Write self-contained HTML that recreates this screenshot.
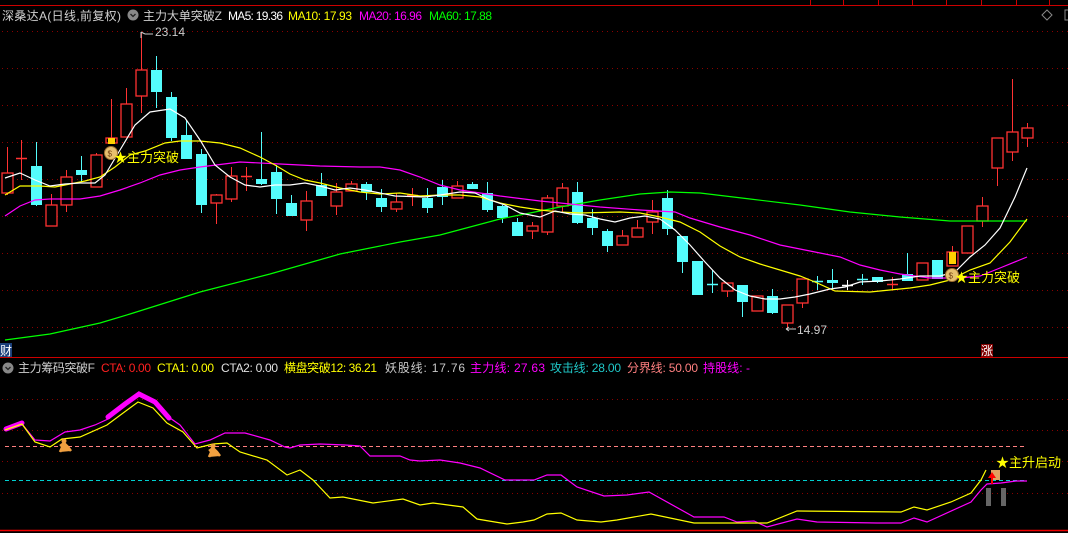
<!DOCTYPE html>
<html><head><meta charset="utf-8"><style>
html,body{margin:0;padding:0;background:#000;width:1068px;height:533px;overflow:hidden}
svg{display:block}
text{font-family:"Liberation Sans","Noto Sans CJK SC",sans-serif;font-size:12px}
</style></head><body>
<svg id="s" width="1068" height="533" xmlns="http://www.w3.org/2000/svg">
<rect width="1068" height="533" fill="#000"/>
<line x1="0" y1="5.5" x2="1068" y2="5.5" stroke="#c00" stroke-width="1"/>
<g stroke="#c00">
<line x1="810.5" y1="0" x2="810.5" y2="5"/><line x1="843.5" y1="0" x2="843.5" y2="5"/><line x1="878.5" y1="0" x2="878.5" y2="5"/><line x1="912.5" y1="0" x2="912.5" y2="5"/><line x1="946.5" y1="0" x2="946.5" y2="5"/><line x1="981.5" y1="0" x2="981.5" y2="5"/><line x1="1016.5" y1="0" x2="1016.5" y2="5"/><line x1="1049.5" y1="0" x2="1049.5" y2="5"/>
</g>
<g stroke="#8b0000" stroke-dasharray="1,4" stroke-width="1">
<line x1="2" y1="31.5" x2="1068" y2="31.5"/><line x1="2" y1="68.5" x2="1068" y2="68.5"/><line x1="2" y1="105.5" x2="1068" y2="105.5"/><line x1="2" y1="142.5" x2="1068" y2="142.5"/><line x1="2" y1="179.5" x2="1068" y2="179.5"/><line x1="2" y1="216.5" x2="1068" y2="216.5"/><line x1="2" y1="253.5" x2="1068" y2="253.5"/><line x1="2" y1="290.5" x2="1068" y2="290.5"/><line x1="2" y1="327.5" x2="1068" y2="327.5"/>
<line x1="2" y1="399.5" x2="1068" y2="399.5"/><line x1="2" y1="430.5" x2="1068" y2="430.5"/><line x1="2" y1="461.5" x2="1068" y2="461.5"/><line x1="2" y1="493.5" x2="1068" y2="493.5"/>
</g>
<line x1="0" y1="357.5" x2="1068" y2="357.5" stroke="#c00"/>
<line x1="0" y1="530.5" x2="1068" y2="530.5" stroke="#e00" stroke-width="1.5"/>
<line x1="5" y1="446.5" x2="1027" y2="446.5" stroke="#ff8080" stroke-dasharray="4,3"/>
<line x1="5" y1="480.5" x2="1027" y2="480.5" stroke="#00d0d0" stroke-dasharray="4,3"/>
<g id="candles"></g>
<g fill="none" stroke-width="1.2">
<polyline stroke="#00ff00" points="5,340 50,334 100,323 130,314 200,292 270,274 340,254 400,242 440,235 500,219 560,207 600,200 640,194 670,192 700,193 750,199 800,205 850,212 900,217 950,221 1027,221"/>
<polyline stroke="#ff00ff" points="5,216 20,206 35,200 50,199 80,199 100,196 120,190 140,183 160,175 180,170 200,167 240,162 280,164 320,166 360,167 380,167 400,170 420,177 440,185 460,190 480,193 500,196 540,201 560,203 600,207 640,210 675,212 690,218 720,227 750,235 780,245 810,251 840,257 860,265 880,270 900,274 930,278 960,278 980,276 1000,268 1027,257"/>
<polyline stroke="#ffff00" points="5,195 20,186 40,186 55,187 70,184 85,181 100,177 115,167 130,155 145,151 165,143 180,141 200,141 220,143 240,148 260,157 275,165 290,174 305,180 320,183 340,188 360,192 380,194 400,193 420,196 440,195 460,195 480,197 500,203 520,207 540,210 560,212 580,213 620,212 640,213 660,217 680,222 700,232 720,246 740,257 760,264 780,270 800,276 815,282 835,291 870,292 890,290 910,288 930,285 950,280 970,270 990,263 1010,242 1027,219"/>
<polyline stroke="#ffffff" points="5,178 20,173 35,180 50,186 65,184 80,183 95,183 105,175 120,150 135,125 150,112 170,109 185,118 200,140 215,165 230,177 245,185 260,187 275,185 290,185 305,183 320,186 335,190 350,188 365,190 380,193 395,196 425,197 440,195 460,192 475,193 490,200 505,205 520,213 540,217 555,211 570,214 585,215 600,219 615,222 630,218 645,216 660,219 675,230 690,245 705,262 720,278 735,290 750,296 765,299 780,299 795,297 810,294 830,289 845,287 860,282 880,281 900,279 920,276 940,276 955,272 970,257 985,245 1000,228 1015,197 1027,168"/>
</g>
<!-- markers main -->
<rect x="108" y="138" width="7" height="6" fill="#ffd000"/>
<circle cx="111" cy="153" r="6.5" fill="#e8c070" stroke="#a07030"/>
<text x="107.5" y="156.5" style="font-size:8px" fill="#704010">$</text>
<text x="114" y="162" fill="#ffff00" style="font-size:13px">★主力突破</text>
<rect x="949" y="252" width="7" height="12" fill="#ffd000"/>
<circle cx="952" cy="275" r="6.5" fill="#e8c070" stroke="#a07030"/>
<text x="948.5" y="278.5" style="font-size:8px" fill="#704010">$</text>
<text x="955" y="282" fill="#ffff00" style="font-size:13px">★主力突破</text>
<path d="M141 32 V38 M141 32 l4 2 M145 34 h8" stroke="#ccc" fill="none"/>
<text x="155" y="36" fill="#ccc">23.14</text>
<path d="M786 329 h10 M786 329 l3 -2 M786 329 l3 2" stroke="#ccc" fill="none"/>
<text x="797" y="334" fill="#ccc">14.97</text>
<!-- header -->
<text x="2" y="20" fill="#d0d0d0" textLength="119">深桑达A(日线,前复权)</text>
<circle cx="133" cy="15" r="5.5" fill="#888"/><path d="M130.5 14 l2.5 2.5 l2.5 -2.5" stroke="#222" fill="none" stroke-width="1.3"/>
<text x="143" y="20" fill="#d0d0d0" textLength="79">主力大单突破Z</text>
<text x="228" y="20" fill="#fff" textLength="55">MA5: 19.36</text>
<text x="288" y="20" fill="#ffff00" textLength="64">MA10: 17.93</text>
<text x="359" y="20" fill="#ff00ff" textLength="63">MA20: 16.96</text>
<text x="429" y="20" fill="#00ff00" textLength="63">MA60: 17.88</text>
<path d="M1042 15 l5 -5 l5 5 l-5 5 z" stroke="#888" fill="none"/>
<rect x="1065" y="10" width="5" height="10" stroke="#888" fill="none"/>
<rect x="0" y="343" width="12" height="14" fill="#1a3f7a"/>
<text x="0" y="355" fill="#fff">财</text>
<rect x="981" y="344" width="12" height="13" fill="#800000"/>
<text x="981" y="355" fill="#fff">涨</text>
<!-- sub header -->
<circle cx="8" cy="368" r="5.5" fill="#888"/><path d="M5.5 367 l2.5 2.5 l2.5 -2.5" stroke="#222" fill="none" stroke-width="1.3"/>
<text x="18" y="372" fill="#d0d0d0" textLength="77">主力筹码突破F</text>
<text x="101" y="372" fill="#ff2020" textLength="50">CTA: 0.00</text>
<text x="157" y="372" fill="#ffff00" textLength="57">CTA1: 0.00</text>
<text x="221" y="372" fill="#e0e0e0" textLength="57">CTA2: 0.00</text>
<text x="284" y="372" fill="#ffff00" textLength="93">横盘突破12: 36.21</text>
<text x="385" y="372" fill="#c8c8c8" textLength="80">妖股线: 17.76</text>
<text x="470" y="372" fill="#ff00ff" textLength="75">主力线: 27.63</text>
<text x="550" y="372" fill="#20c8c8" textLength="71">攻击线: 28.00</text>
<text x="627" y="372" fill="#ff8080" textLength="71">分界线: 50.00</text>
<text x="703" y="372" fill="#ff00ff" textLength="47">持股线: -</text>
<!-- sub lines -->
<g fill="none">
<polyline stroke="#ff00ff" stroke-width="1.2" points="22,424 35,440 50,441 65,432 80,430 95,425 108,419 125,405 140,395 155,403 170,418 180,425 195,444 210,440 225,433 245,433 270,440 285,447 290,448 300,445 320,444 345,445 360,446 370,456 400,456 410,460 420,461 440,460 460,463 480,468 505,480 534,480 547,475 561,475 577,487 604,496 627,495 649,492 694,517 724,517 737,522 754,521 767,527 797,519 817,522 877,523 901,523 914,518 927,522 971,502 981,490 987,484 1001,483 1016,481 1027,481"/>
<polyline stroke="#ff00ff" stroke-width="5" stroke-linecap="round" points="6,429 22,423"/>
<polyline stroke="#ff00ff" stroke-width="5" stroke-linecap="round" points="108,417 125,404 139,394 155,402 169,418"/>
<polyline stroke="#ffff00" stroke-width="1.2" points="5,430 22,424 35,442 50,447 62,439 80,437 107,425 138,402 153,408 167,423 183,432 197,448 213,444 227,443 240,452 267,460 287,475 300,470 313,480 330,498 343,497 373,503 403,499 420,505 433,503 463,507 477,519 507,524 523,522 534,520 547,514 561,513 577,520 601,522 617,520 651,514 694,523 767,523 797,511 901,512 914,507 927,510 951,502 971,493 981,480 986,470"/>
</g>
<g fill="#f0a040"><circle cx="64" cy="441" r="2.5"/><path d="M60 452 l4 -9 l4 4 l3 4 M64 443 l-4 3" stroke="#f0a040" stroke-width="2.5"/>
<circle cx="213" cy="446" r="2.5"/><path d="M209 457 l4 -9 l4 4 l3 4 M213 448 l-4 3" stroke="#f0a040" stroke-width="2.5"/></g>
<rect x="986" y="488" width="5" height="18" fill="#666"/><rect x="1001" y="488" width="5" height="18" fill="#666"/>
<rect x="991" y="470" width="9" height="10" fill="#e0a060"/>
<path d="M988 478 l4 -6 l4 6 z M991 478 h2 v6 h-2z" fill="#ff0000"/>
<text x="996" y="467" fill="#ffff00" style="font-size:13px">★主升启动</text>
</svg>
<script>
var C=[[7,'r',173,193,147,195],[21,'r',158,158,140,180],[36,'c',166,205,142,206],[51,'r',205,226,194,226],[66,'r',177,205,170,212],[81,'c',170,175,156,182],[96,'r',155,187,153,187],[111,'r',138,143,99,143],[126,'r',104,137,88,137],[141,'r',70,96,32,113],[156,'c',70,92,56,108],[171,'c',97,138,92,141],[186,'c',135,159,120,159],[201,'c',154,205,149,213],[216,'r',195,203,194,224],[231,'r',176,199,167,202],[246,'r',176,176,167,191],[261,'c',179,184,132,185],[276,'c',172,199,165,214],[291,'c',203,216,195,216],[306,'r',201,220,191,231],[321,'c',185,196,173,196],[336,'r',192,206,183,215],[351,'r',184,191,181,191],
[366,'c',184,192,182,200],[381,'c',198,207,189,212],[396,'r',202,209,193,212],[412,'r',195,195,188,206],[427,'c',198,208,188,213],[442,'c',187,197,180,205],[457,'r',186,198,181,198],[472,'c',184,189,182,189],[487,'c',193,210,182,212],[502,'c',206,218,205,223],[517,'c',222,236,218,236],[532,'r',226,231,222,239],[547,'r',198,232,195,235],[562,'r',188,206,183,213],[577,'c',192,223,182,224],[592,'c',218,228,209,235],[607,'c',231,246,229,252],[622,'r',236,245,230,245],[637,'r',228,237,220,237],[652,'r',212,222,200,234],[667,'c',198,229,190,235],
[682,'c',236,262,236,273],[697,'c',261,295,261,295],[712,'c',284,284,270,293],[727,'r',283,291,283,297],[742,'c',285,302,285,317],[757,'r',296,311,296,311],[772,'c',296,313,289,314],[787,'r',305,323,305,328],[802,'r',279,303,279,308],[817,'c',281,281,276,290],[832,'c',280,283,269,290],[847,'w',285,285,280,290],[862,'c',279,279,274,285],[877,'c',277,282,277,283],[892,'r',284,284,277,290],[907,'c',274,281,253,281],[922,'r',263,280,263,280],[937,'c',260,279,260,279],[952,'r',252,266,246,266],[967,'r',226,253,226,253],[982,'r',206,221,197,227],[997,'r',138,168,138,186],[1012,'r',132,152,79,161],[1027,'r',128,138,123,147]];
var g=document.getElementById('candles'),h='';
C.forEach(function(c){var x=c[0],col=c[1]=='r'?'#ff3232':(c[1]=='c'?'#54fcfc':'#fff');
h+='<line x1="'+(x+.5)+'" y1="'+c[4]+'" x2="'+(x+.5)+'" y2="'+c[5]+'" stroke="'+col+'"/>';
if(c[3]-c[2]<2){h+='<line x1="'+(x-5)+'" y1="'+(c[2]+.5)+'" x2="'+(x+6)+'" y2="'+(c[2]+.5)+'" stroke="'+col+'" stroke-width="1.5"/>';}
else if(c[1]=='r'){h+='<rect x="'+(x-5)+'" y="'+c[2]+'" width="11" height="'+(c[3]-c[2])+'" fill="#000" stroke="'+col+'" stroke-width="1.3"/>';}
else{h+='<rect x="'+(x-5)+'" y="'+c[2]+'" width="11" height="'+(c[3]-c[2])+'" fill="'+col+'"/>';}});
g.innerHTML=h;
</script>
</body></html>
